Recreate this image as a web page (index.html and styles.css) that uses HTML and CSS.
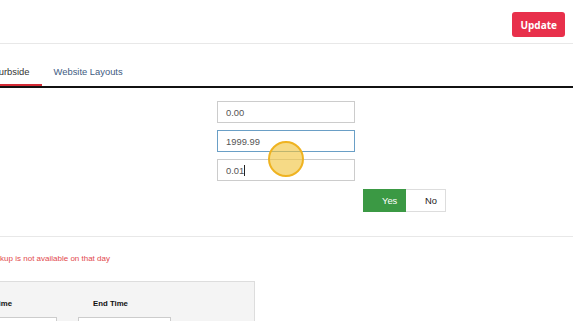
FILE: index.html
```html
<!DOCTYPE html>
<html lang="en">
<head>
    <meta charset="UTF-8">
    <meta name="viewport" content="width=device-width, initial-scale=1.0">
    <title>Store Settings</title>
    <link rel="stylesheet" href="styles.css">
</head>
<body>
    <header class="topbar">
        <button class="btn-update">Update</button>
    </header>

    <nav class="tabs">
        <a class="tab active">Curbside</a>
        <a class="tab">Website Layouts</a>
    </nav>

    <section class="pricing">
        <div class="fields">
            <input class="field" type="text" value="0.00">
            <input class="field is-focused" type="text" value="1999.99">
            <div class="field-wrap">
                <input class="field" type="text" value="0.01">
                <span class="caret"></span>
            </div>
        </div>
        <div class="toggle">
            <button class="toggle-btn on">Yes</button>
            <button class="toggle-btn">No</button>
        </div>
    </section>

    <hr class="divider">

    <p class="error">Pickup is not available on that day</p>

    <div class="hours-box">
        <div class="hours-col">
            <label>Start Time</label>
            <input class="time-input" type="text">
        </div>
        <div class="hours-col">
            <label>End Time</label>
            <input class="time-input" type="text">
        </div>
    </div>

    <div class="click-dot"></div>
</body>
</html>
```

FILE: styles.css
```css
body {
    margin: 0;
    font-family: 'Liberation Sans', Arial, sans-serif;
    background-color: #ffffff;
    overflow: hidden;
    position: relative;
    height: 321px;
}
.topbar {
    display: flex;
    justify-content: flex-end;
    align-items: flex-start;
    height: 43px;
    border-bottom: 1px solid #e8e8e8;
}
.btn-update {
    margin: 12px 8px 0 0;
    height: 25px;
    padding: 0 8px;
    background-color: #e8304b;
    color: #ffffff;
    font-family: 'Open Sans', 'Liberation Sans', sans-serif;
    font-weight: bold;
    font-size: 10px;
    border: none;
    border-radius: 3px;
}
.tabs {
    display: flex;
    margin-top: 13px;
    margin-left: -20px;
    border-bottom: 2px solid #111111;
}
.tab {
    display: block;
    height: 29px;
    line-height: 29px;
    padding: 0 12px;
    font-size: 9.4px;
    color: #3e5b82;
    box-sizing: border-box;
}
.tab.active {
    color: #333333;
    border-bottom: 2px solid #d42a35;
}
.pricing {
    padding: 13px 0 0 217px;
}
.fields {
    display: flex;
    flex-direction: column;
    gap: 7px;
    width: 138px;
}
.field {
    box-sizing: border-box;
    width: 138px;
    height: 22px;
    padding: 0 8px;
    border: 1px solid #cccccc;
    font-family: 'Liberation Sans', Arial, sans-serif;
    font-size: 9.4px;
    color: #555555;
    outline: none;
}
.field.is-focused {
    border-color: #6a9fc6;
}
.field-wrap {
    position: relative;
}
.caret {
    position: absolute;
    left: 27px;
    top: 6px;
    width: 1px;
    height: 11px;
    background-color: #222222;
}
.toggle {
    display: flex;
    margin: 8px 0 0 146px;
}
.toggle-btn {
    box-sizing: border-box;
    height: 23px;
    padding: 0 8px 0 19px;
    font-family: 'Liberation Sans', Arial, sans-serif;
    font-size: 9.4px;
    color: #222222;
    background-color: #ffffff;
    border: 1px solid #dddddd;
    border-left: none;
}
.toggle-btn.on {
    width: 43px;
    background-color: #3b9944;
    border-color: #3b9944;
    color: #ffffff;
}
.toggle-btn:last-child {
    width: 40px;
}
.divider {
    margin: 24px 0 0;
    border: none;
    border-top: 1px solid #e8e8e8;
}
.error {
    margin: 17px 0 0 -11px;
    font-size: 8px;
    line-height: 10px;
    color: #e2484d;
}
.hours-box {
    display: flex;
    gap: 21px;
    margin: 17px 0 0 -42px;
    width: 297px;
    height: 60px;
    padding: 17px 0 0 0;
    box-sizing: border-box;
    background-color: #f4f4f4;
    border: 1px solid #dddddd;
}
.hours-col {
    display: flex;
    flex-direction: column;
}
.hours-col label {
    padding-left: 15px;
    font-size: 7.8px;
    font-weight: bold;
    color: #111111;
    line-height: 10px;
}
.time-input {
    box-sizing: border-box;
    width: 98px;
    height: 22px;
    margin-top: 8px;
    border: 1px solid #cccccc;
    background-color: #ffffff;
}
.hours-col:last-child .time-input {
    width: 93px;
}
.click-dot {
    position: absolute;
    left: 268px;
    top: 141px;
    width: 36px;
    height: 36px;
    box-sizing: border-box;
    border-radius: 50%;
    border: 2px solid #efb321;
    background-color: rgba(240, 196, 60, 0.62);
}
```
